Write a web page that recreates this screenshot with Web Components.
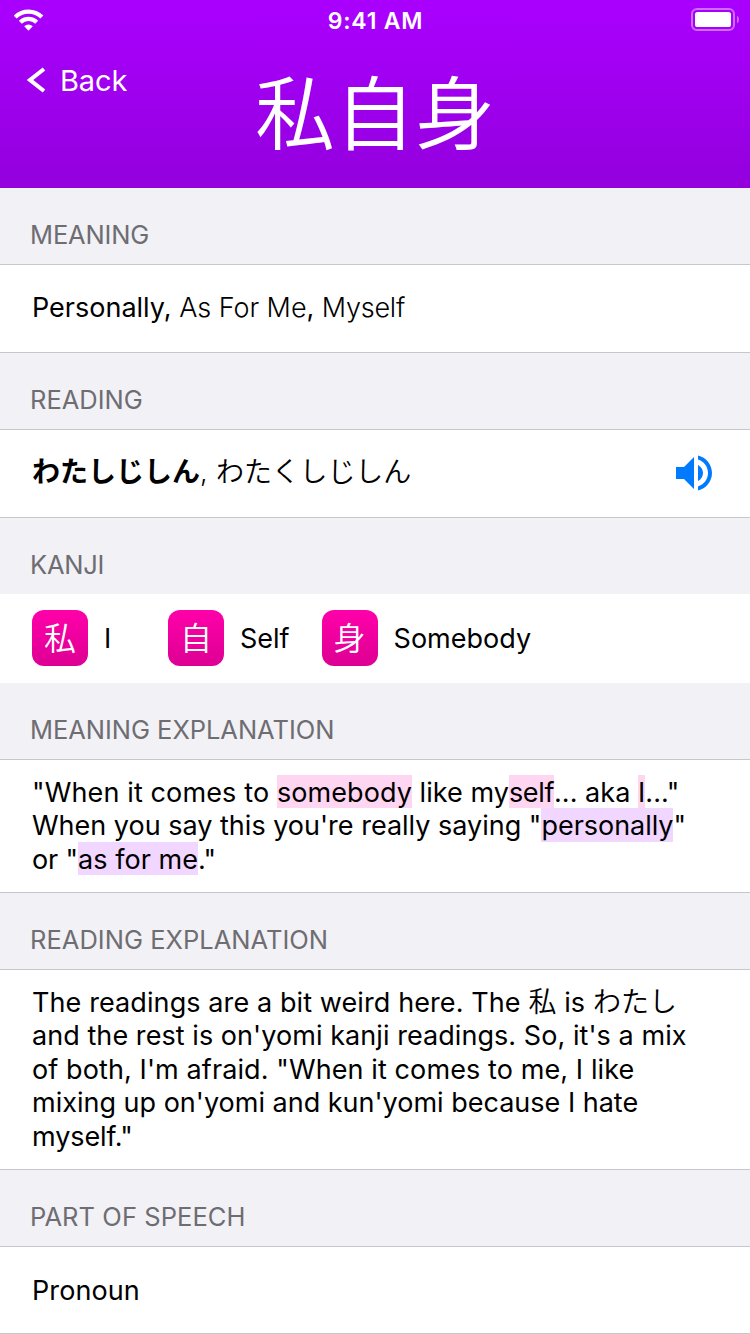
<!DOCTYPE html>
<html lang="en">
<head>
<meta charset="utf-8">
<title>私自身</title>
<style>
  body { margin: 0; background: #f2f1f6; font-family: Inter, "Noto Sans CJK JP", sans-serif; color: #000; }
</style>
</head>
<body>
<study-page></study-page>

<template id="t-page">
  <style>
    :host { display: flex; flex-direction: column; width: 750px; height: 1334px; overflow: hidden; }
    .kanji { display: flex; gap: 32px; }
    .jp { font-size: 28px; }
    .thin { font-weight: 300; }
    .kana { font-weight: 350; letter-spacing: -.15px; }
    .text { font-weight: 350; }
    .bold { font-weight: 700; }
    .comma { font-weight: 350; letter-spacing: .4px; }
    volume-icon { position: relative; top: -1px; }
  </style>
  <subject-header>私自身</subject-header>
  <info-section heading="Meaning" size="87" pad="25" track="-.15">
    <text-line>Personally, <span class="thin" style="letter-spacing:-.05px">As For Me</span>, <span class="thin" style="letter-spacing:-.25px">Myself</span></text-line>
  </info-section>
  <info-section heading="Reading" size="87" pad="25">
    <text-line><span class="jp bold">わたしじしん</span><span class="comma">, </span><span class="jp kana">わたくしじしん</span></text-line>
    <volume-icon slot="action"></volume-icon>
  </info-section>
  <info-section heading="Kanji" size="89" pad="16" track="-.25" plain>
    <div class="kanji">
      <kanji-chip glyph="私">I</kanji-chip>
      <kanji-chip glyph="自">Self</kanji-chip>
      <kanji-chip glyph="身">Somebody</kanji-chip>
    </div>
  </info-section>
  <info-section heading="Meaning Explanation" size="132" pad="15" track="-.04">
    <text-line track=".13">"When it comes to <hi-light kind="kanji" track=".07">somebody</hi-light><span style="letter-spacing:.04px"> like my</span><hi-light kind="kanji" track="-.35">self</hi-light><span style="letter-spacing:.04px">... aka </span><hi-light kind="kanji">I</hi-light>..."</text-line>
    <text-line>When you say this you're really saying "<hi-light kind="vocab" track="-.04">personally</hi-light>"</text-line>
    <text-line track="-.12">or "<hi-light kind="vocab" track=".04">as for me</hi-light>."</text-line>
  </info-section>
  <info-section heading="Reading Explanation" size="199" pad="15" track=".02">
    <text-line track=".1">The readings are a bit weird here. The <span class="jp text">私</span> is <span class="jp text">わたし</span></text-line>
    <text-line track=".06">and the rest is on'yomi kanji readings. So, it's a mix</text-line>
    <text-line track=".1">of both, I'm afraid. "When it comes to me, I like</text-line>
    <text-line>mixing up on'yomi and kun'yomi because I hate</text-line>
    <text-line track="-.1">myself."</text-line>
  </info-section>
  <info-section heading="Part of Speech" size="86" pad="25.5" track=".06">
    <text-line track=".1">Pronoun</text-line>
  </info-section>
</template>

<template id="t-header">
  <style>
    :host { display: flex; flex-direction: column; flex: none; height: 188px; color: #fff; background: linear-gradient(#aa00ff, #9300dd); }
    .bar { display: grid; grid-template-columns: 1fr auto 1fr; align-items: center; height: 40px; padding: 0 11px 0 14px; }
    .time { font-size: 23px; font-weight: 580; letter-spacing: .8px; line-height: 40px; padding-top: 1px; margin-left: -2px; }
    .battery { justify-self: end; position: relative; top: -.5px; }
    .wifi { position: relative; top: -.5px; }
    svg { display: block; }
    .nav { display: grid; grid-template-columns: 1fr auto 1fr; align-items: start; }
    .back { display: flex; align-items: center; gap: 14px; height: 40px; padding: 20px 0 0 27px; font-size: 29px; }
    .back span { line-height: 40px; padding-top: 2px; letter-spacing: -.1px; }
    h1 { margin: 0; font: 350 80px/116px "Noto Sans CJK JP", sans-serif; padding-top: 10px; }
  </style>
  <div class="bar">
    <svg class="wifi" width="30" height="24" viewBox="14 8 30 24" fill="none" stroke="#fff">
      <path d="M15.1 17.1a19 19 0 0 1 26.8 0" stroke-width="4.3"/>
      <path d="M20.3 22.3a11.6 11.6 0 0 1 16.4 0" stroke-width="4.1"/>
      <path d="M24.2 26.3a6.1 6.1 0 0 1 8.6 0L28.5 30.8z" fill="#fff" stroke="none"/>
    </svg>
    <div class="time">9:41 AM</div>
    <svg class="battery" width="48" height="24" viewBox="691 8 48 24">
      <rect x="692" y="9" width="42" height="21" rx="5" fill="none" stroke="#fff" stroke-opacity=".42" stroke-width="2"/>
      <rect x="695" y="12" width="36" height="15" rx="2.6" fill="#fff"/>
      <path d="M737 15.5q2 1.4 2 4t-2 4z" fill="#fff" fill-opacity=".42"/>
    </svg>
  </div>
  <div class="nav">
    <div class="back">
      <svg width="19" height="26" viewBox="27 67 19 26" fill="none" stroke="#fff" stroke-width="4.1"><path d="M44 69 30.1 80 44 91"/></svg>
      <span>Back</span>
    </div>
    <h1><slot></slot></h1>
  </div>
</template>

<template id="t-section">
  <style>
    :host { display: block; flex: none; }
    h2 { box-sizing: border-box; height: 76px; margin: 0; padding: 32px 30px 0; font-size: 25.5px; font-weight: 400; line-height: 30px; color: #6d6d72; text-transform: uppercase; background: #f2f1f6; white-space: nowrap; }
    .cell { display: flex; justify-content: space-between; box-sizing: content-box; padding: 0 32px; background: #fff; border: solid #c7c7cb; border-width: 1px 0; }
    :host([plain]) .cell { border: 0; }
    .body { flex: 1; }
    .action { display: flex; align-items: center; }
  </style>
  <h2></h2>
  <div class="cell"><div class="body"><slot></slot></div><div class="action"><slot name="action"></slot></div></div>
</template>

<template id="t-line"><style>
    :host { display: block; height: 33.4px; font-size: 27px; line-height: 35.4px; white-space: pre; }
  </style><slot></slot></template>

<template id="t-hi"><style>
    :host { display: inline-block; height: 33.4px; vertical-align: top; letter-spacing: 0; }
    :host([kind="kanji"]) { background: #ffd6f1; }
    :host([kind="vocab"]) { background: #f1d6ff; }
  </style><slot></slot></template>

<template id="t-chip">
  <style>
    :host { display: flex; align-items: center; gap: 16px; }
    .tile { width: 56px; height: 56px; border-radius: 12px; background: linear-gradient(#ff00aa, #dd0093); color: #fff; font: 350 32px/52px "Noto Sans CJK JP", sans-serif; text-align: center; }
    .label { min-width: 32px; font-size: 27px; line-height: 58px; height: 56px; }
  </style>
  <div class="tile"></div><div class="label"><slot></slot></div>
</template>

<template id="t-volume">
  <style>:host { display: block; width: 48px; height: 48px; } svg { display: block; }</style>
  <svg width="48" height="48" viewBox="0 0 24 24" fill="#007aff"><path d="M3 9v6h4l5 5V4L7 9H3zm13.5 3c0-1.77-1.02-3.29-2.5-4.03v8.05c1.48-.73 2.5-2.25 2.5-4.02zM14 3.23v2.06c2.89.86 5 3.54 5 6.71s-2.11 5.85-5 6.71v2.06c4.01-.91 7-4.49 7-8.77s-2.99-7.86-7-8.77z"/></svg>
</template>

<script>
  class Base extends HTMLElement {
    constructor() {
      super();
      this.attachShadow({ mode: 'open' }).append(
        document.getElementById(this.constructor.tpl).content.cloneNode(true));
    }
    $(sel) { return this.shadowRoot.querySelector(sel); }
  }
  class Tracked extends Base {
    connectedCallback() {
      if (this.hasAttribute('track')) this.style.letterSpacing = this.getAttribute('track') + 'px';
    }
  }
  customElements.define('text-line', class extends Tracked { static tpl = 't-line'; });
  customElements.define('hi-light', class extends Tracked { static tpl = 't-hi'; });
  customElements.define('volume-icon', class extends Base { static tpl = 't-volume'; });
  customElements.define('kanji-chip', class extends Base {
    static tpl = 't-chip';
    connectedCallback() { this.$('.tile').textContent = this.getAttribute('glyph'); }
  });
  customElements.define('info-section', class extends Base {
    static tpl = 't-section';
    connectedCallback() {
      const h = this.$('h2');
      h.textContent = this.getAttribute('heading');
      h.style.letterSpacing = (this.getAttribute('track') || 0) + 'px';
      this.$('.cell').style.height = this.getAttribute('size') + 'px';
      this.$('.body').style.paddingTop = this.getAttribute('pad') + 'px';
    }
  });
  customElements.define('subject-header', class extends Base { static tpl = 't-header'; });
  customElements.define('study-page', class extends Base { static tpl = 't-page'; });
</script>
</body>
</html>
